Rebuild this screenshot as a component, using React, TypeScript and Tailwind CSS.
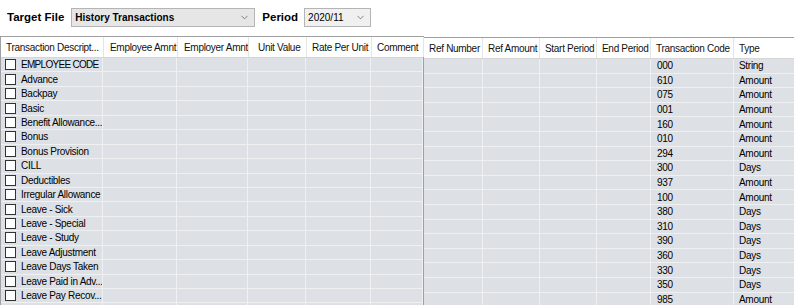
import { ChevronDown } from 'lucide-react'

interface Col {
  label: string
  width: number
  pad?: number
}

const leftCols: Col[] = [
  { label: 'Transaction Descript...', width: 103 },
  { label: 'Employee Amnt', width: 74, pad: 6 },
  { label: 'Employer Amnt', width: 71, pad: 6 },
  { label: 'Unit Value', width: 58, pad: 9 },
  { label: 'Rate Per Unit', width: 65 },
  { label: 'Comment', width: 52 },
]

const rightCols: Col[] = [
  { label: 'Ref Number', width: 59 },
  { label: 'Ref Amount', width: 57 },
  { label: 'Start Period', width: 57 },
  { label: 'End Period', width: 54 },
  { label: 'Transaction Code', width: 83 },
  { label: 'Type', width: 61 },
]

const rows: [string, string, string][] = [
  ['EMPLOYEE CODE', '000', 'String'],
  ['Advance', '610', 'Amount'],
  ['Backpay', '075', 'Amount'],
  ['Basic', '001', 'Amount'],
  ['Benefit Allowance...', '160', 'Amount'],
  ['Bonus', '010', 'Amount'],
  ['Bonus Provision', '294', 'Amount'],
  ['CILL', '300', 'Days'],
  ['Deductibles', '937', 'Amount'],
  ['Irregular Allowance', '100', 'Amount'],
  ['Leave - Sick', '380', 'Days'],
  ['Leave - Special', '310', 'Days'],
  ['Leave - Study', '390', 'Days'],
  ['Leave Adjustment', '360', 'Days'],
  ['Leave Days Taken', '330', 'Days'],
  ['Leave Paid in Adv...', '350', 'Days'],
  ['Leave Pay Recov...', '985', 'Amount'],
  ['', '', ''],
]

function Header({ cols }: { cols: Col[] }) {
  return (
    <div className="flex h-[21px] items-center border-b border-[#d5d5d5] bg-white text-[#111]">
      {cols.map((c) => (
        <div
          key={c.label}
          className="flex h-full shrink-0 items-center overflow-hidden whitespace-nowrap border-r border-[#e5e5e5]"
          style={{ width: c.width, paddingLeft: c.pad ?? 5 }}
        >
          {c.label}
        </div>
      ))}
    </div>
  )
}

export default function App() {
  return (
    <div className="h-[305px] w-[794px] overflow-hidden bg-white text-[10px] tracking-[-0.3px] text-black [font-family:'Liberation_Sans',Arial,sans-serif]">
      <div className="flex h-[36px] items-center pb-[1px] tracking-normal">
        <span className="ml-[7px] text-[11.5px] font-bold">Target File</span>
        <div className="ml-[7px] flex h-[19px] w-[184px] items-center justify-between border border-[#b4b4b4] bg-[#e6e6e6] pl-[3px] pr-[4px] text-[10px] font-bold">
          <span>History Transactions</span>
          <ChevronDown className="h-[11px] w-[11px] text-[#555]" strokeWidth={1.5} />
        </div>
        <span className="ml-[7px] text-[11.5px] font-bold">Period</span>
        <div className="ml-[6px] flex h-[19px] w-[67px] items-center justify-between border border-[#b4b4b4] bg-[#f0f0f0] pl-[3px] pr-[4px] text-[10px]">
          <span>2020/11</span>
          <ChevronDown className="h-[11px] w-[11px] text-[#555]" strokeWidth={1.5} />
        </div>
      </div>

      <div className="flex items-start">
        <div className="w-[424px] shrink-0 border-l border-t border-r border-[#a0a0a0]">
          <Header cols={leftCols} />
          {rows.map((r, i) => (
            <div key={i} className="flex h-[14.45px] bg-[#dde1e5]">
              {leftCols.map((c, j) => (
                <div
                  key={c.label}
                  className="flex h-full shrink-0 items-center overflow-hidden whitespace-nowrap border-b border-r border-[#eef0f2]"
                  style={{ width: j === 0 ? c.width - 1 : c.width }}
                >
                  {j === 0 && (
                    <>
                      <span className="ml-[4px] h-[11px] w-[11px] shrink-0 border border-[#333] bg-white" />
                      <span className={`ml-[5px] ${i === 0 ? 'tracking-[-0.7px]' : ''}`}>{r[0]}</span>
                    </>
                  )}
                </div>
              ))}
            </div>
          ))}
        </div>

        <div className="mt-[1px] flex-1 border-t border-[#a0a0a0]">
          <Header cols={rightCols} />
          {rows.map((r, i) => (
            <div key={i} className="flex h-[14.6px] bg-[#dde1e5]">
              {rightCols.map((c, j) => (
                <div
                  key={c.label}
                  className="flex h-full shrink-0 items-center overflow-hidden whitespace-nowrap border-b border-r border-[#eef0f2]"
                  style={{ width: c.width, paddingLeft: j === 4 ? 6 : 5 }}
                >
                  {j === 4 ? r[1] : j === 5 ? r[2] : ''}
                </div>
              ))}
            </div>
          ))}
        </div>
      </div>
    </div>
  )
}
